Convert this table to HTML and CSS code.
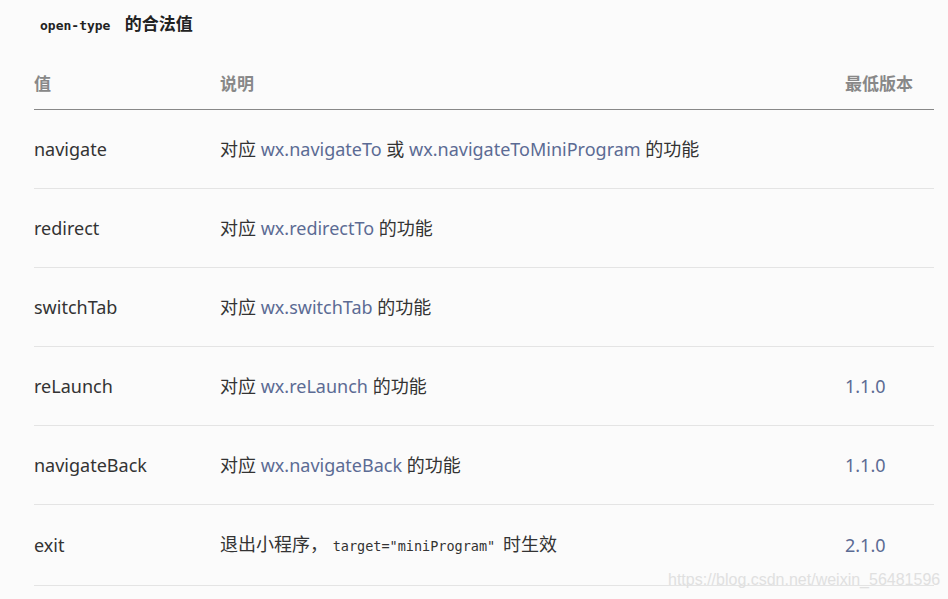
FILE: index.html
```html
<!DOCTYPE html>
<html lang="zh-CN">
<head>
  <meta charset="UTF-8" />
  <title>open-type 的合法值</title>
  <link rel="stylesheet" href="styles.css">
</head>
<body>

<div class="page">
  <h4 class="title"><code>open-type</code> 的合法值</h4>

  <table class="values">
    <thead>
      <tr>
        <th class="col-value">值</th>
        <th class="col-desc">说明</th>
        <th class="col-ver">最低版本</th>
      </tr>
    </thead>
    <tbody>
      <tr>
        <td>navigate</td>
        <td>对应 <a>wx.navigateTo</a> 或 <a>wx.navigateToMiniProgram</a> 的功能</td>
        <td></td>
      </tr>
      <tr>
        <td>redirect</td>
        <td>对应 <a>wx.redirectTo</a> 的功能</td>
        <td></td>
      </tr>
      <tr>
        <td>switchTab</td>
        <td>对应 <a>wx.switchTab</a> 的功能</td>
        <td></td>
      </tr>
      <tr>
        <td>reLaunch</td>
        <td>对应 <a>wx.reLaunch</a> 的功能</td>
        <td><a>1.1.0</a></td>
      </tr>
      <tr>
        <td>navigateBack</td>
        <td>对应 <a>wx.navigateBack</a> 的功能</td>
        <td><a>1.1.0</a></td>
      </tr>
      <tr>
        <td>exit</td>
        <td>退出小程序， <code>target="miniProgram"</code> 时生效</td>
        <td><a>2.1.0</a></td>
      </tr>
    </tbody>
  </table>

  <div class="watermark">https://blog.csdn.net/weixin_56481596</div>
</div>

</body>
</html>
```

FILE: styles.css
```css
body {
  margin: 0;
  background: #fbfbfb;
  font-family: "Noto Sans", "Noto Sans CJK SC", sans-serif;
  color: #333;
}

.page {
  position: relative;
  width: 948px;
  height: 599px;
  padding: 0 14px 0 34px;
  box-sizing: border-box;
  overflow: hidden;
}

.title {
  margin: 0;
  padding-top: 11px;
  height: 26px;
  font-size: 17px;
  font-weight: bold;
  color: #222;
  line-height: 26px;
}

.title code {
  font-family: "DejaVu Sans Mono", monospace;
  font-size: 13px;
  font-weight: bold;
  margin: 0 10px 0 6px;
}

.values {
  width: 900px;
  margin-top: 23px;
  border-collapse: collapse;
  table-layout: fixed;
}

.values th {
  text-align: left;
  font-size: 17px;
  font-weight: bold;
  color: #888;
  height: 37px;
  padding: 0 0 12px;
  line-height: 26px;
  vertical-align: bottom;
  border-bottom: 1px solid #888;
}

.col-value { width: 186px; }
.col-desc { width: 625px; }

.values td {
  height: 78px;
  padding: 0;
  font-size: 18px;
  line-height: 26px;
  vertical-align: middle;
  border-bottom: 1px solid #e4e4e4;
}

.values tbody tr:last-child td {
  height: 80px;
}

.values a {
  color: #5b6b94;
}

.values td code {
  font-family: "DejaVu Sans Mono", monospace;
  font-size: 13.5px;
  color: #333;
  margin-right: 3px;
}

.watermark {
  position: absolute;
  left: 668px;
  top: 571px;
  font-family: "Liberation Sans", sans-serif;
  font-size: 16px;
  color: #e0e0e0;
}
```
